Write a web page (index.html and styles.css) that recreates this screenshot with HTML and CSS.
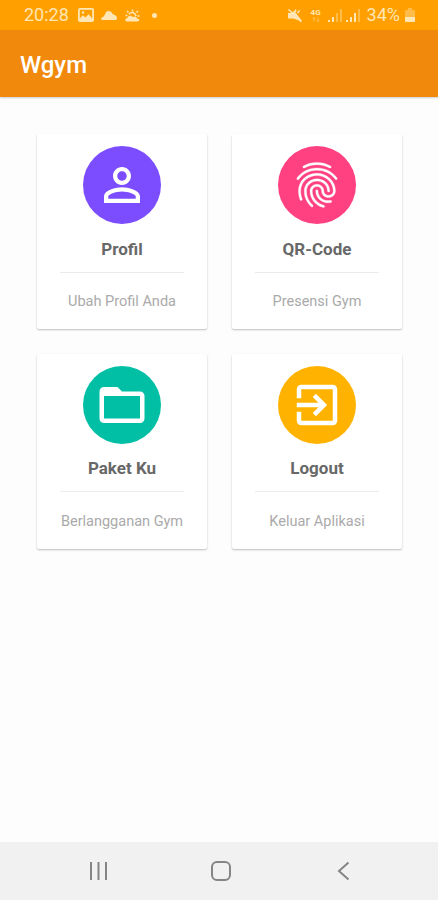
FILE: index.html
```html
<!DOCTYPE html>
<html lang="id">
<head>
<meta charset="utf-8">
<title>Wgym</title>
<link rel="stylesheet" href="styles.css">
</head>
<body>
<div class="screen">
  <header class="status">
    <span class="status-text">20:28</span>
    <svg class="st-image" width="16" height="14" viewBox="0 0 16 14"><path fill-rule="evenodd" d="M2 0h12a2 2 0 0 1 2 2v10a2 2 0 0 1-2 2H2a2 2 0 0 1-2-2V2a2 2 0 0 1 2-2zm-.2 1.8v8.8L5 7.3l2.500 2.200 3-3.200 3.700 4V1.800zM5 3.200a1.300 1.300 0 1 1 0 2.600a1.300 1.300 0 1 1 0-2.600z"/></svg>
    <svg class="st-cloud" width="16" height="9" viewBox="0 0 16 9"><path d="M2 9C-.5 9-.5 6.500 2 6 4 5.500 4 0 7.500 0s3.500 3 5 3.500C17 5 17 9 14 9z"/></svg>
    <svg class="st-sun" width="15" height="13" viewBox="0 0 15 13"><path d="M2.500 12.500c-3 0-3-3 0-3.500.5-2.500 4-3 5-1 3-1.500 4.500 0 4.500 1.500 3 0 3 3 .5 3z"/><path class="line" d="M4 5.500c1-3 6-3 7 1.500M7.500 2.500V.5M3.500 3.500L2 2M11.500 3.500L13 2M12.500 7h2M2.500 6.500h-2"/></svg>
    <i class="dot"></i>
    <span class="grow"></span>
    <svg class="st-mute" width="14" height="13" viewBox="0 0 14 13"><path d="M0 4h4l2-2.500L14 12l-1 1-2-1.500L5.500 9.500H0z"/><path class="line" d="M.5 .5L13 12.500M9.500 4L11.500 1.500M7.500 3V.5"/></svg>
    <span class="net"><b>4G</b><svg width="8" height="5" viewBox="0 0 8 5"><path class="line thin" d="M2 4.500V.5M.8 1.700L2 .5l1.200 1.200M6 .5v4M4.800 3.300L6 4.500l1.200-1.200"/></svg></span>
    <svg class="st-signal" width="14" height="13" viewBox="0 0 14 13"><path d="M0 11h2v2H0zM4 8h2v5H4z"/><path class="faint" d="M8 4h2v9H8zM12 0h2v13h-2z"/></svg>
    <svg class="st-signal2" width="14" height="13" viewBox="0 0 14 13"><path d="M0 11h2v2H0zM4 8h2v5H4zM8 4h2v9H8z"/><path class="faint" d="M12 0h2v13h-2z"/></svg>
    <span class="status-text">34%</span>
    <svg class="st-battery" width="10" height="14" viewBox="0 0 10 14"><path class="faint" d="M3 0h4v2h2q1 0 1 1v6H0V3q0-1 1-1h2z"/><path d="M0 9h10v4q0 1-1 1H1q-1 0-1-1z"/></svg>
  </header>
  <div class="appbar"><h1>Wgym</h1></div>
  <main class="grid">
    <section class="card">
      <div class="disc purple"><svg viewBox="0 0 24 24"><path d="M12 5.900c1.160 0 2.100.94 2.100 2.100s-.94 2.100-2.100 2.100S9.900 9.160 9.900 8s.94-2.100 2.100-2.100m0 9c2.970 0 6.100 1.460 6.100 2.100v1.100H5.900V17c0-.64 3.130-2.100 6.100-2.100M12 4C9.790 4 8 5.790 8 8s1.790 4 4 4 4-1.790 4-4-1.790-4-4-4zm0 9c-2.670 0-8 1.340-8 4v3h16v-3c0-2.660-5.330-4-8-4z"/></svg></div>
      <h2>Profil</h2>
      <hr>
      <p>Ubah Profil Anda</p>
    </section>
    <section class="card">
      <div class="disc pink"><svg class="bold" viewBox="0 0 24 24"><path d="M17.81 4.470c-.08 0-.16-.02-.23-.06C15.66 3.420 14 3 12.010 3c-1.980 0-3.860.47-5.570 1.410-.24.13-.54.04-.68-.2-.13-.24-.04-.55.2-.68C7.820 2.520 9.860 2 12.010 2c2.130 0 3.990.47 6.030 1.520.25.13.34.43.21.67-.09.18-.26.28-.44.28zM3.500 9.720c-.1 0-.2-.03-.29-.09-.23-.16-.28-.47-.12-.7.99-1.400 2.250-2.500 3.750-3.270C9.980 4.040 14 4.030 17.150 5.650c1.500.77 2.760 1.860 3.750 3.250.16.22.11.54-.12.7-.23.16-.54.11-.7-.12-.9-1.260-2.040-2.250-3.390-2.940-2.870-1.470-6.540-1.470-9.400.01-1.360.7-2.500 1.700-3.400 2.960-.08.14-.23.21-.39.21zm6.250 12.070c-.13 0-.26-.05-.35-.15-.87-.87-1.340-1.430-2.010-2.640-.69-1.230-1.050-2.730-1.050-4.340 0-2.970 2.540-5.390 5.660-5.390s5.660 2.420 5.660 5.390c0 .28-.22.5-.5.5s-.5-.22-.5-.5c0-2.420-2.090-4.390-4.660-4.390-2.570 0-4.660 1.970-4.660 4.390 0 1.440.32 2.770.93 3.850.64 1.150 1.080 1.640 1.850 2.420.19.2.19.51 0 .71-.11.1-.24.15-.37.15zm7.170-1.850c-1.190 0-2.240-.3-3.100-.89-1.490-1.010-2.380-2.650-2.380-4.390 0-.28.22-.5.5-.5s.5.22.5.5c0 1.410.72 2.740 1.940 3.560.71.48 1.540.71 2.540.71.24 0 .64-.03 1.040-.1.27-.05.53.13.58.41.05.27-.13.53-.41.58-.57.11-1.070.12-1.210.12zM14.910 22c-.04 0-.09-.01-.13-.02-1.590-.44-2.630-1.030-3.720-2.100-1.400-1.390-2.170-3.240-2.170-5.220 0-1.620 1.380-2.940 3.080-2.940 1.700 0 3.080 1.320 3.080 2.940 0 1.070.93 1.940 2.080 1.940s2.080-.87 2.080-1.940c0-3.770-3.250-6.830-7.250-6.830-2.840 0-5.440 1.580-6.610 4.030-.39.81-.59 1.760-.59 2.800 0 .78.07 2.010.67 3.610.1.26-.03.55-.29.64-.26.1-.55-.04-.64-.29-.49-1.310-.73-2.610-.73-3.960 0-1.200.23-2.290.68-3.240 1.330-2.790 4.280-4.600 7.510-4.600 4.550 0 8.250 3.510 8.250 7.830 0 1.620-1.380 2.940-3.080 2.940s-3.080-1.320-3.080-2.940c0-1.070-.93-1.940-2.080-1.940s-2.080.87-2.080 1.940c0 1.710.66 3.310 1.870 4.510.95.94 1.860 1.460 3.270 1.850.27.07.42.35.35.61-.05.23-.26.38-.47.38z"/></svg></div>
      <h2>QR-Code</h2>
      <hr>
      <p>Presensi Gym</p>
    </section>
    <section class="card low">
      <div class="disc teal"><svg viewBox="0 0 24 24"><path d="M20 6h-8l-2-2H4c-1.100 0-1.990.9-1.990 2L2 18c0 1.100.9 2 2 2h16c1.100 0 2-.9 2-2V8c0-1.100-.9-2-2-2zm0 12H4V8h16v10z"/></svg></div>
      <h2>Paket Ku</h2>
      <hr>
      <p>Berlangganan Gym</p>
    </section>
    <section class="card low">
      <div class="disc amber"><svg viewBox="0 0 24 24"><path d="M10.090 15.590L11.500 17l5-5-5-5-1.410 1.410L12.670 11H3v2h9.670l-2.580 2.590zM19 3H5c-1.110 0-2 .9-2 2v4h2V5h14v14H5v-4H3v4c0 1.100.89 2 2 2h14c1.100 0 2-.9 2-2V5c0-1.100-.9-2-2-2z"/></svg></div>
      <h2>Logout</h2>
      <hr>
      <p>Keluar Aplikasi</p>
    </section>
  </main>
  <nav class="navbar">
    <svg width="20" height="20" viewBox="0 0 20 20"><path d="M2 1v18M9.500 1v18M17 1v18"/></svg>
    <svg width="20" height="20" viewBox="0 0 20 20"><rect x="1" y="1" width="18" height="18" rx="5"/></svg>
    <svg width="20" height="20" viewBox="0 0 20 20"><path d="M15.500 1.500L6 10l9.500 8.500"/></svg>
  </nav>
</div>
</body>
</html>
```
FILE: styles.css
```css
* { box-sizing: border-box; }
body { margin: 0; font-family: Roboto, sans-serif; background: #fdfdfd; }
h1, h2, p { margin: 0; }
.screen { width: 438px; height: 900px; display: flex; flex-direction: column; }

.status { height: 30px; padding: 0 23px 0 24px; display: flex; align-items: center; background: #ffa000; color: #ffe6b4; }
.status svg { fill: #ffe6b4; display: block; flex: none; }
.status .line { fill: none; stroke: #ffe6b4; stroke-width: 1.5; }
.status .thin { stroke-width: 0.8; opacity: 0.6; }
.status .faint { opacity: 0.4; }
.status-text { font-size: 18px; line-height: 30px; }
.st-image { margin-left: 9px; }
.st-cloud { margin-left: 7px; }
.st-sun { margin-left: 8px; }
.dot { width: 5px; height: 5px; margin-left: 12px; border-radius: 50%; background: #ffe6b4; }
.grow { flex: 1; }
.net { margin-left: 8px; width: 12px; display: flex; flex-direction: column; align-items: center; }
.net b { font-size: 8px; line-height: 8px; }
.st-signal { margin-left: 6px; }
.st-signal2 { margin: 0 7px 0 4px; }
.st-battery { margin-left: 5px; }

.appbar { height: 67px; padding: 3px 0 0 20px; display: flex; align-items: center; background: #f0890c; box-shadow: 0 1px 2px rgba(0, 0, 0, 0.2); }
.appbar h1 { color: #fff; font-size: 24px; font-weight: 500; line-height: 30px; }

.grid { flex: 1; padding: 37px 36px 0 37px; display: grid; grid-template-columns: 170px 170px; gap: 24.5px 25px; align-content: start; }
.card { height: 195px; padding-top: 12px; display: flex; flex-direction: column; align-items: center; background: #fff; border-radius: 2px; box-shadow: 0 1px 2px rgba(0, 0, 0, 0.25); }
.disc { width: 78px; height: 78px; display: grid; place-items: center; border-radius: 50%; }
.disc svg { width: 54px; height: 54px; fill: #fff; }
.disc .bold { stroke: #fff; stroke-width: 0.15; }
.purple { background: #7c4dff; }
.pink { background: #ff4081; }
.teal { background: #00bfa5; }
.amber { background: #ffb300; }
.card h2 { margin-top: 14px; font-size: 17px; font-weight: 700; line-height: 22px; color: #686868; }
.low h2 { margin-top: 13px; }
.card hr { width: 124px; height: 1px; margin: 12px 0 19px; border: 0; background: #ebebeb; }
.low hr { margin-bottom: 20px; }
.card p { font-size: 14.5px; line-height: 20px; color: #aaa; }

.navbar { height: 58px; padding: 0 85px 0 89px; display: flex; justify-content: space-between; align-items: center; background: #f1f1f1; }
.navbar svg { fill: none; stroke: #858585; stroke-width: 2; }
.navbar svg:nth-child(2) { margin-right: 1px; }
```
